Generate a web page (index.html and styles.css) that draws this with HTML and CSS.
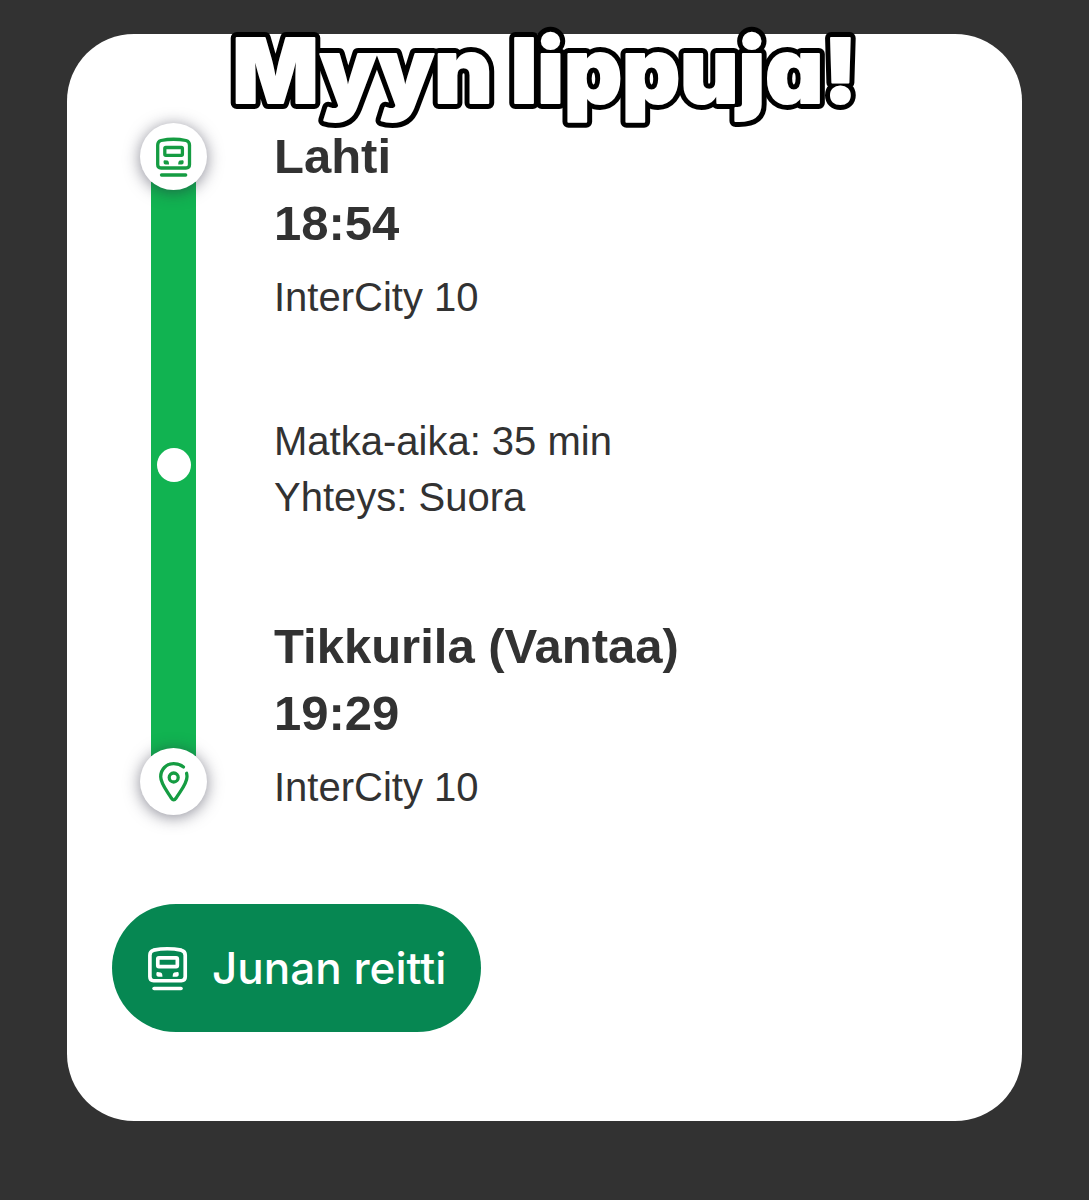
FILE: index.html
```html
<!DOCTYPE html>
<html lang="fi">
<head>
    <meta charset="utf-8">
    <meta name="viewport" content="width=device-width, initial-scale=1">
    <title>Myyn lippuja!</title>
    <link rel="stylesheet" href="styles.css">
</head>
<body>
    <main class="card">
        <h1 class="banner">
            <svg class="banner-text" viewBox="0 0 640 89" role="img" aria-label="Myyn lippuja!">
                <defs>
                    <text id="bannerText" x="320" y="69" text-anchor="middle">Myyn lippuja!</text>
                </defs>
                <use href="#bannerText" class="banner-outline" />
                <use href="#bannerText" class="banner-fill" />
            </svg>
        </h1>

        <section class="journey">
            <div class="rail">
                <span class="rail-stop">
                    <svg class="train-icon" viewBox="0 0 36 40" aria-hidden="true">
                        <path d="M5 3.5Q17.500 1 30 3.500Q33.500 4.400 33.500 8V27.500Q33.500 31 30 31H5Q1.700 31 1.700 27.500V8Q1.700 4.400 5 3.500Z" />
                        <rect x="8.800" y="10.500" width="17.600" height="7.800" rx="1" />
                        <path class="solid" d="M8.500 23.200L11.500 23.600Q13 24 13 27.500H9.500Q7.500 27.500 7.500 25Q7.500 23 8.500 23.200ZM26.700 23.200L23.700 23.600Q22.200 24 22.200 27.500H25.700Q27.700 27.500 27.700 25Q27.700 23 26.700 23.200Z" />
                        <path d="M5.500 38H29.700" />
                    </svg>
                </span>
                <span class="rail-line"><span class="rail-dot"></span></span>
                <span class="rail-stop">
                    <svg class="pin-icon" viewBox="0 0 30 40" aria-hidden="true">
                        <path d="M24.500 5C22 3 18.500 1.700 14.700 1.700C7.200 1.700 1.700 7.500 1.700 14.700C1.700 21.500 7 27.500 12.500 36.300Q14.700 39.500 16.900 36.300C22.500 27.500 28 21.500 28 14.700Q28 13 27.600 11.300" />
                        <circle cx="14.700" cy="15.500" r="4.500" />
                    </svg>
                </span>
            </div>

            <div class="details">
                <div class="stop">
                    <h2 class="station">Lahti</h2>
                    <time class="time">18:54</time>
                    <p class="train">InterCity 10</p>
                </div>
                <div class="trip-info">
                    <p>Matka-aika: 35 min</p>
                    <p>Yhteys: Suora</p>
                </div>
                <div class="stop">
                    <h2 class="station">Tikkurila (Vantaa)</h2>
                    <time class="time">19:29</time>
                    <p class="train">InterCity 10</p>
                </div>
            </div>
        </section>

        <button class="route-btn" type="button">
            <svg class="train-icon" viewBox="0 0 36 40" aria-hidden="true">
                <path d="M5 3.5Q17.500 1 30 3.500Q33.500 4.400 33.500 8V27.500Q33.500 31 30 31H5Q1.700 31 1.700 27.500V8Q1.700 4.400 5 3.500Z" />
                <rect x="8.800" y="10.500" width="17.600" height="7.800" rx="1" />
                <path class="solid" d="M8.500 23.200L11.500 23.600Q13 24 13 27.500H9.500Q7.500 27.500 7.500 25Q7.500 23 8.500 23.200ZM26.700 23.200L23.700 23.600Q22.200 24 22.200 27.500H25.700Q27.700 27.500 27.700 25Q27.700 23 26.700 23.200Z" />
                <path d="M5.500 38H29.700" />
            </svg>
            <span>Junan reitti</span>
        </button>
    </main>
</body>
</html>
```
FILE: styles.css
```css
* {
    box-sizing: border-box;
}

body {
    margin: 0;
    padding: 34px 67px;
    background-color: #323232;
    color: #323232;
    font-family: "Liberation Sans", Arial, sans-serif;
    font-size: 40px;
    line-height: 56px;
}

h1,
h2,
p {
    margin: 0;
}

svg {
    display: block;
    fill: none;
    stroke: currentColor;
    stroke-width: 3.3;
    stroke-linecap: round;
    stroke-linejoin: round;
}

.card {
    background-color: #fff;
    border-radius: 67px;
    padding: 0 45px 89px;
}

/* Bubble lettering: black outline below, fattened white letters on top */
.banner {
    display: flex;
    justify-content: center;
}

.banner-text {
    width: 640px;
    max-width: 100%;
    overflow: visible;
    font-family: Inter, sans-serif;
    font-size: 90px;
    font-weight: 900;
    font-feature-settings: "cv11";
}

.banner-outline {
    stroke: #000;
    stroke-width: 12;
}

.banner-fill {
    fill: #fff;
    stroke: #fff;
    stroke-width: 2;
}

.journey {
    display: flex;
    gap: 67px;
    padding-left: 28px;
    margin-bottom: 89px;
}

.rail {
    display: flex;
    flex-direction: column;
    align-items: center;
    flex-shrink: 0;
}

.rail-stop {
    position: relative;
    z-index: 1;
    display: flex;
    align-items: center;
    justify-content: center;
    width: 67px;
    height: 67px;
    border-radius: 50%;
    background-color: #fff;
    color: #159c42;
    box-shadow: 0 2px 16px rgba(40, 40, 60, 0.55);
}

.rail-line {
    display: flex;
    flex: 1;
    align-items: center;
    justify-content: center;
    width: 45px;
    margin: -8px 0;
    padding-bottom: 8px;
    background-color: #11b351;
}

.rail-dot {
    width: 34px;
    height: 34px;
    border-radius: 50%;
    background-color: #fff;
}

.train-icon {
    width: 36px;
    height: 40px;
}

.train-icon .solid {
    fill: currentColor;
    stroke: none;
}

.pin-icon {
    width: 30px;
    height: 40px;
}

.details {
    display: flex;
    flex-direction: column;
    gap: 88px;
}

.station,
.time {
    display: block;
    font-size: 49px;
    font-weight: bold;
    line-height: 67px;
}

.train {
    margin-top: 12px;
}

.route-btn {
    display: flex;
    align-items: center;
    gap: 24px;
    min-height: 128px;
    padding: 0 35px 0 36px;
    border: none;
    border-radius: 64px;
    background-color: #068752;
    color: #fff;
    font-family: Inter, sans-serif;
    font-size: 44px;
    font-weight: 500;
    cursor: pointer;
}

.route-btn:hover {
    background-color: #057547;
}

.route-btn .train-icon {
    width: 40px;
    height: 45px;
}
```
